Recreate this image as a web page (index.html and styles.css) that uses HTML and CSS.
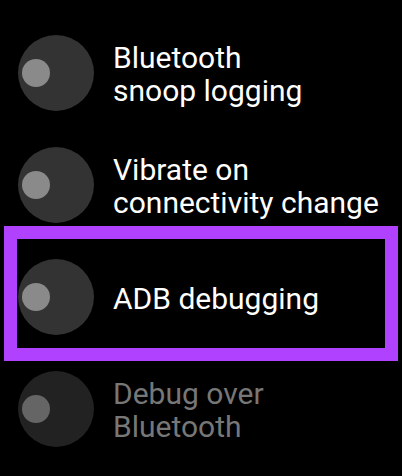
FILE: index.html
```html
<!DOCTYPE html>
<html>
<head lang="en">
    <meta charset="UTF-8">
    <title>Developer options</title>
    <link rel="stylesheet" href="styles.css">
</head>
<body>
<ul class="list">
    <li class="row">
        <div class="toggle"><span class="knob"></span></div>
        <div class="label">Bluetooth<br>snoop logging</div>
    </li>
    <li class="row">
        <div class="toggle"><span class="knob"></span></div>
        <div class="label">Vibrate on<br>connectivity change</div>
    </li>
    <li class="row marked">
        <div class="toggle"><span class="knob"></span></div>
        <div class="label">ADB debugging</div>
        <span class="mark"></span>
    </li>
    <li class="row disabled">
        <div class="toggle"><span class="knob"></span></div>
        <div class="label">Debug over<br>Bluetooth</div>
    </li>
</ul>
</body>
</html>
```

FILE: styles.css
```css
*{margin: 0; padding: 0; box-sizing: border-box}
ul{list-style: none}

body{
    width: 402px;
    height: 476px;
    background: #000000;
    overflow: hidden;
    font-family: Roboto, "Liberation Sans", sans-serif;
}
.list{
    padding-top: 17px;
}
.row{
    height: 112px;
    display: flex;
    align-items: center;
    gap: 19px;
    padding-left: 18px;
    position: relative;
}
.toggle{
    width: 76px;
    height: 76px;
    flex: none;
    border-radius: 50%;
    background: #333333;
    display: flex;
    align-items: center;
    padding-left: 4px;
}
.knob{
    width: 28px;
    height: 28px;
    border-radius: 50%;
    background: #8a8a8a;
}
.label{
    color: #ffffff;
    font-size: 30px;
    line-height: 33px;
    padding-top: 2px;
}
.disabled .toggle{
    background: #222222;
}
.disabled .knob{
    background: #656565;
}
.disabled .label{
    color: #777777;
}
.mark{
    position: absolute;
    top: -15px;
    bottom: -8px;
    left: 4px;
    right: 4px;
    border: 13px solid #b041ff;
}
```
